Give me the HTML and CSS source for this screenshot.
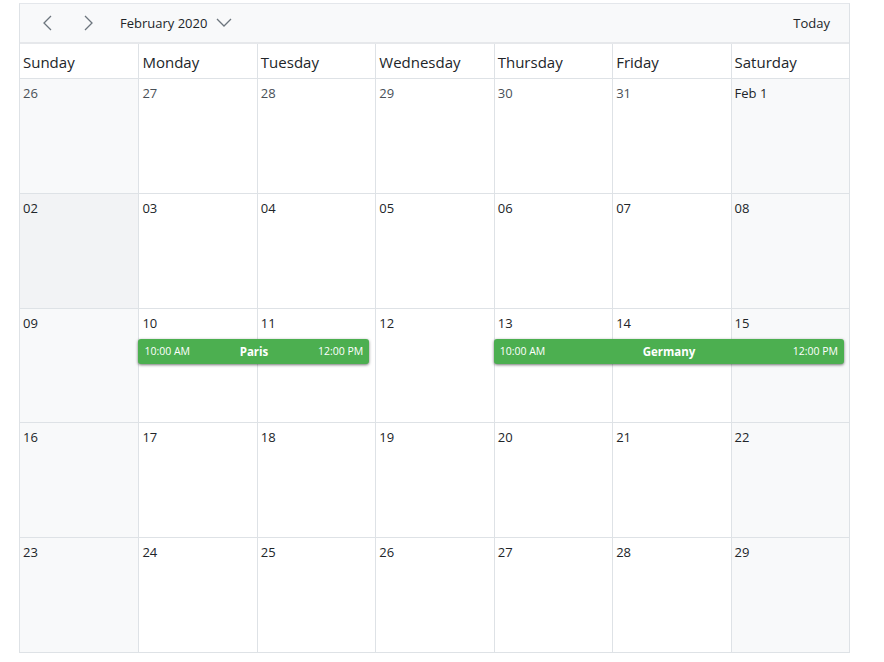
FILE: index.html
```html
<!DOCTYPE html>
<html lang="en">

<head>
    <meta charset="UTF-8">
    <meta name="viewport" content="width=device-width, initial-scale=1.0">
    <title>Month Calendar</title>
    <link rel="stylesheet" href="styles.css">
</head>

<body>

    <div class="scheduler">
        <div class="toolbar">
            <button class="nav-btn" title="Previous">
                <svg width="12" height="16" viewBox="0 0 12 16"><path d="M9 1 L2 8 L9 15" fill="none" stroke="#6c757d" stroke-width="1.3"/></svg>
            </button>
            <button class="nav-btn" title="Next">
                <svg width="12" height="16" viewBox="0 0 12 16"><path d="M3 1 L10 8 L3 15" fill="none" stroke="#6c757d" stroke-width="1.3"/></svg>
            </button>
            <div class="date-range">
                <span>February 2020</span>
                <svg width="16" height="10" viewBox="0 0 16 10"><path d="M1 1 L8 8 L15 1" fill="none" stroke="#6c757d" stroke-width="1.3"/></svg>
            </div>
            <div class="spacer"></div>
            <button class="today-btn">Today</button>
        </div>

        <div class="header-row">
            <div class="header-cell">Sunday</div>
            <div class="header-cell">Monday</div>
            <div class="header-cell">Tuesday</div>
            <div class="header-cell">Wednesday</div>
            <div class="header-cell">Thursday</div>
            <div class="header-cell">Friday</div>
            <div class="header-cell">Saturday</div>
        </div>

        <div class="week">
            <div class="day weekend other">26</div>
            <div class="day other">27</div>
            <div class="day other">28</div>
            <div class="day other">29</div>
            <div class="day other">30</div>
            <div class="day other">31</div>
            <div class="day weekend">Feb 1</div>
        </div>

        <div class="week">
            <div class="day weekend hover">02</div>
            <div class="day">03</div>
            <div class="day">04</div>
            <div class="day">05</div>
            <div class="day">06</div>
            <div class="day">07</div>
            <div class="day weekend">08</div>
        </div>

        <div class="week">
            <div class="day weekend">09</div>
            <div class="day">10</div>
            <div class="day">11</div>
            <div class="day">12</div>
            <div class="day">13</div>
            <div class="day">14</div>
            <div class="day weekend">15</div>

            <div class="event ev-paris">
                <span class="ev-time">10:00 AM</span>
                <span class="ev-title">Paris</span>
                <span class="ev-time">12:00 PM</span>
            </div>
            <div class="event ev-germany">
                <span class="ev-time">10:00 AM</span>
                <span class="ev-title">Germany</span>
                <span class="ev-time">12:00 PM</span>
            </div>
        </div>

        <div class="week">
            <div class="day weekend">16</div>
            <div class="day">17</div>
            <div class="day">18</div>
            <div class="day">19</div>
            <div class="day">20</div>
            <div class="day">21</div>
            <div class="day weekend">22</div>
        </div>

        <div class="week">
            <div class="day weekend">23</div>
            <div class="day">24</div>
            <div class="day">25</div>
            <div class="day">26</div>
            <div class="day">27</div>
            <div class="day">28</div>
            <div class="day weekend">29</div>
        </div>
    </div>

</body>

</html>
```

FILE: styles.css
```css
body {
    font-family: "Open Sans", "Noto Sans", sans-serif;
    background-color: #fff;
    color: #212529;
    margin: 0;
    padding: 3px 0 0 19px;
}

.scheduler {
    width: 829px;
    border: 1px solid #dee2e6;
    border-top: 1px solid #e4e7eb;
}

.toolbar {
    display: flex;
    align-items: center;
    height: 38px;
    padding-left: 8px;
    padding-right: 19px;
    background-color: #f8f9fa;
    border-bottom: 2px solid #e6e8eb;
}

.nav-btn {
    background: none;
    border: none;
    padding: 0;
    width: 40px;
    height: 30px;
    display: flex;
    align-items: center;
    justify-content: center;
}

.date-range {
    display: flex;
    align-items: center;
    gap: 9px;
    margin-left: 12px;
    font-size: 13px;
    color: #212529;
}

.spacer {
    flex: 1;
}

.today-btn {
    background: none;
    border: none;
    padding: 0;
    font-family: inherit;
    font-size: 13px;
    color: #212529;
}

.header-row,
.week {
    display: grid;
    grid-template-columns: repeat(7, 1fr);
}

.header-cell {
    height: 34px;
    line-height: 36px;
    padding-left: 3px;
    font-size: 15px;
    color: #212529;
    border-left: 1px solid #dee2e6;
    border-bottom: 1px solid #dee2e6;
}

.day {
    grid-row: 1;
    height: 108.8px;
    padding: 5px 0 0 3px;
    font-size: 13px;
    color: #212529;
    border-left: 1px solid #dee2e6;
    border-bottom: 1px solid #dee2e6;
}

.day:nth-child(1) { grid-column: 1; }
.day:nth-child(2) { grid-column: 2; }
.day:nth-child(3) { grid-column: 3; }
.day:nth-child(4) { grid-column: 4; }
.day:nth-child(5) { grid-column: 5; }
.day:nth-child(6) { grid-column: 6; }
.day:nth-child(7) { grid-column: 7; }

.header-cell:first-child,
.day:first-child {
    border-left: none;
}

.week:last-child .day {
    border-bottom: none;
}

.day.other {
    color: #495057;
}

.weekend {
    background-color: #f8f9fa;
}

.day.hover {
    background-color: #f2f3f5;
}

.event {
    grid-row: 1;
    align-self: start;
    margin-top: 30px;
    height: 25px;
    display: flex;
    align-items: center;
    justify-content: space-between;
    padding: 0 6px 0 6px;
    background-color: #4caf50;
    color: #fff;
    border-radius: 3px;
    box-shadow: 0 1px 3px rgba(0, 0, 0, 0.55);
    position: relative;
}

.ev-paris {
    grid-column: 2 / 4;
    margin-right: 6px;
}

.ev-germany {
    grid-column: 5 / 8;
    margin-right: 5px;
}

.ev-time {
    font-size: 10.5px;
}

.ev-title {
    font-size: 11.5px;
    font-weight: bold;
}
```
